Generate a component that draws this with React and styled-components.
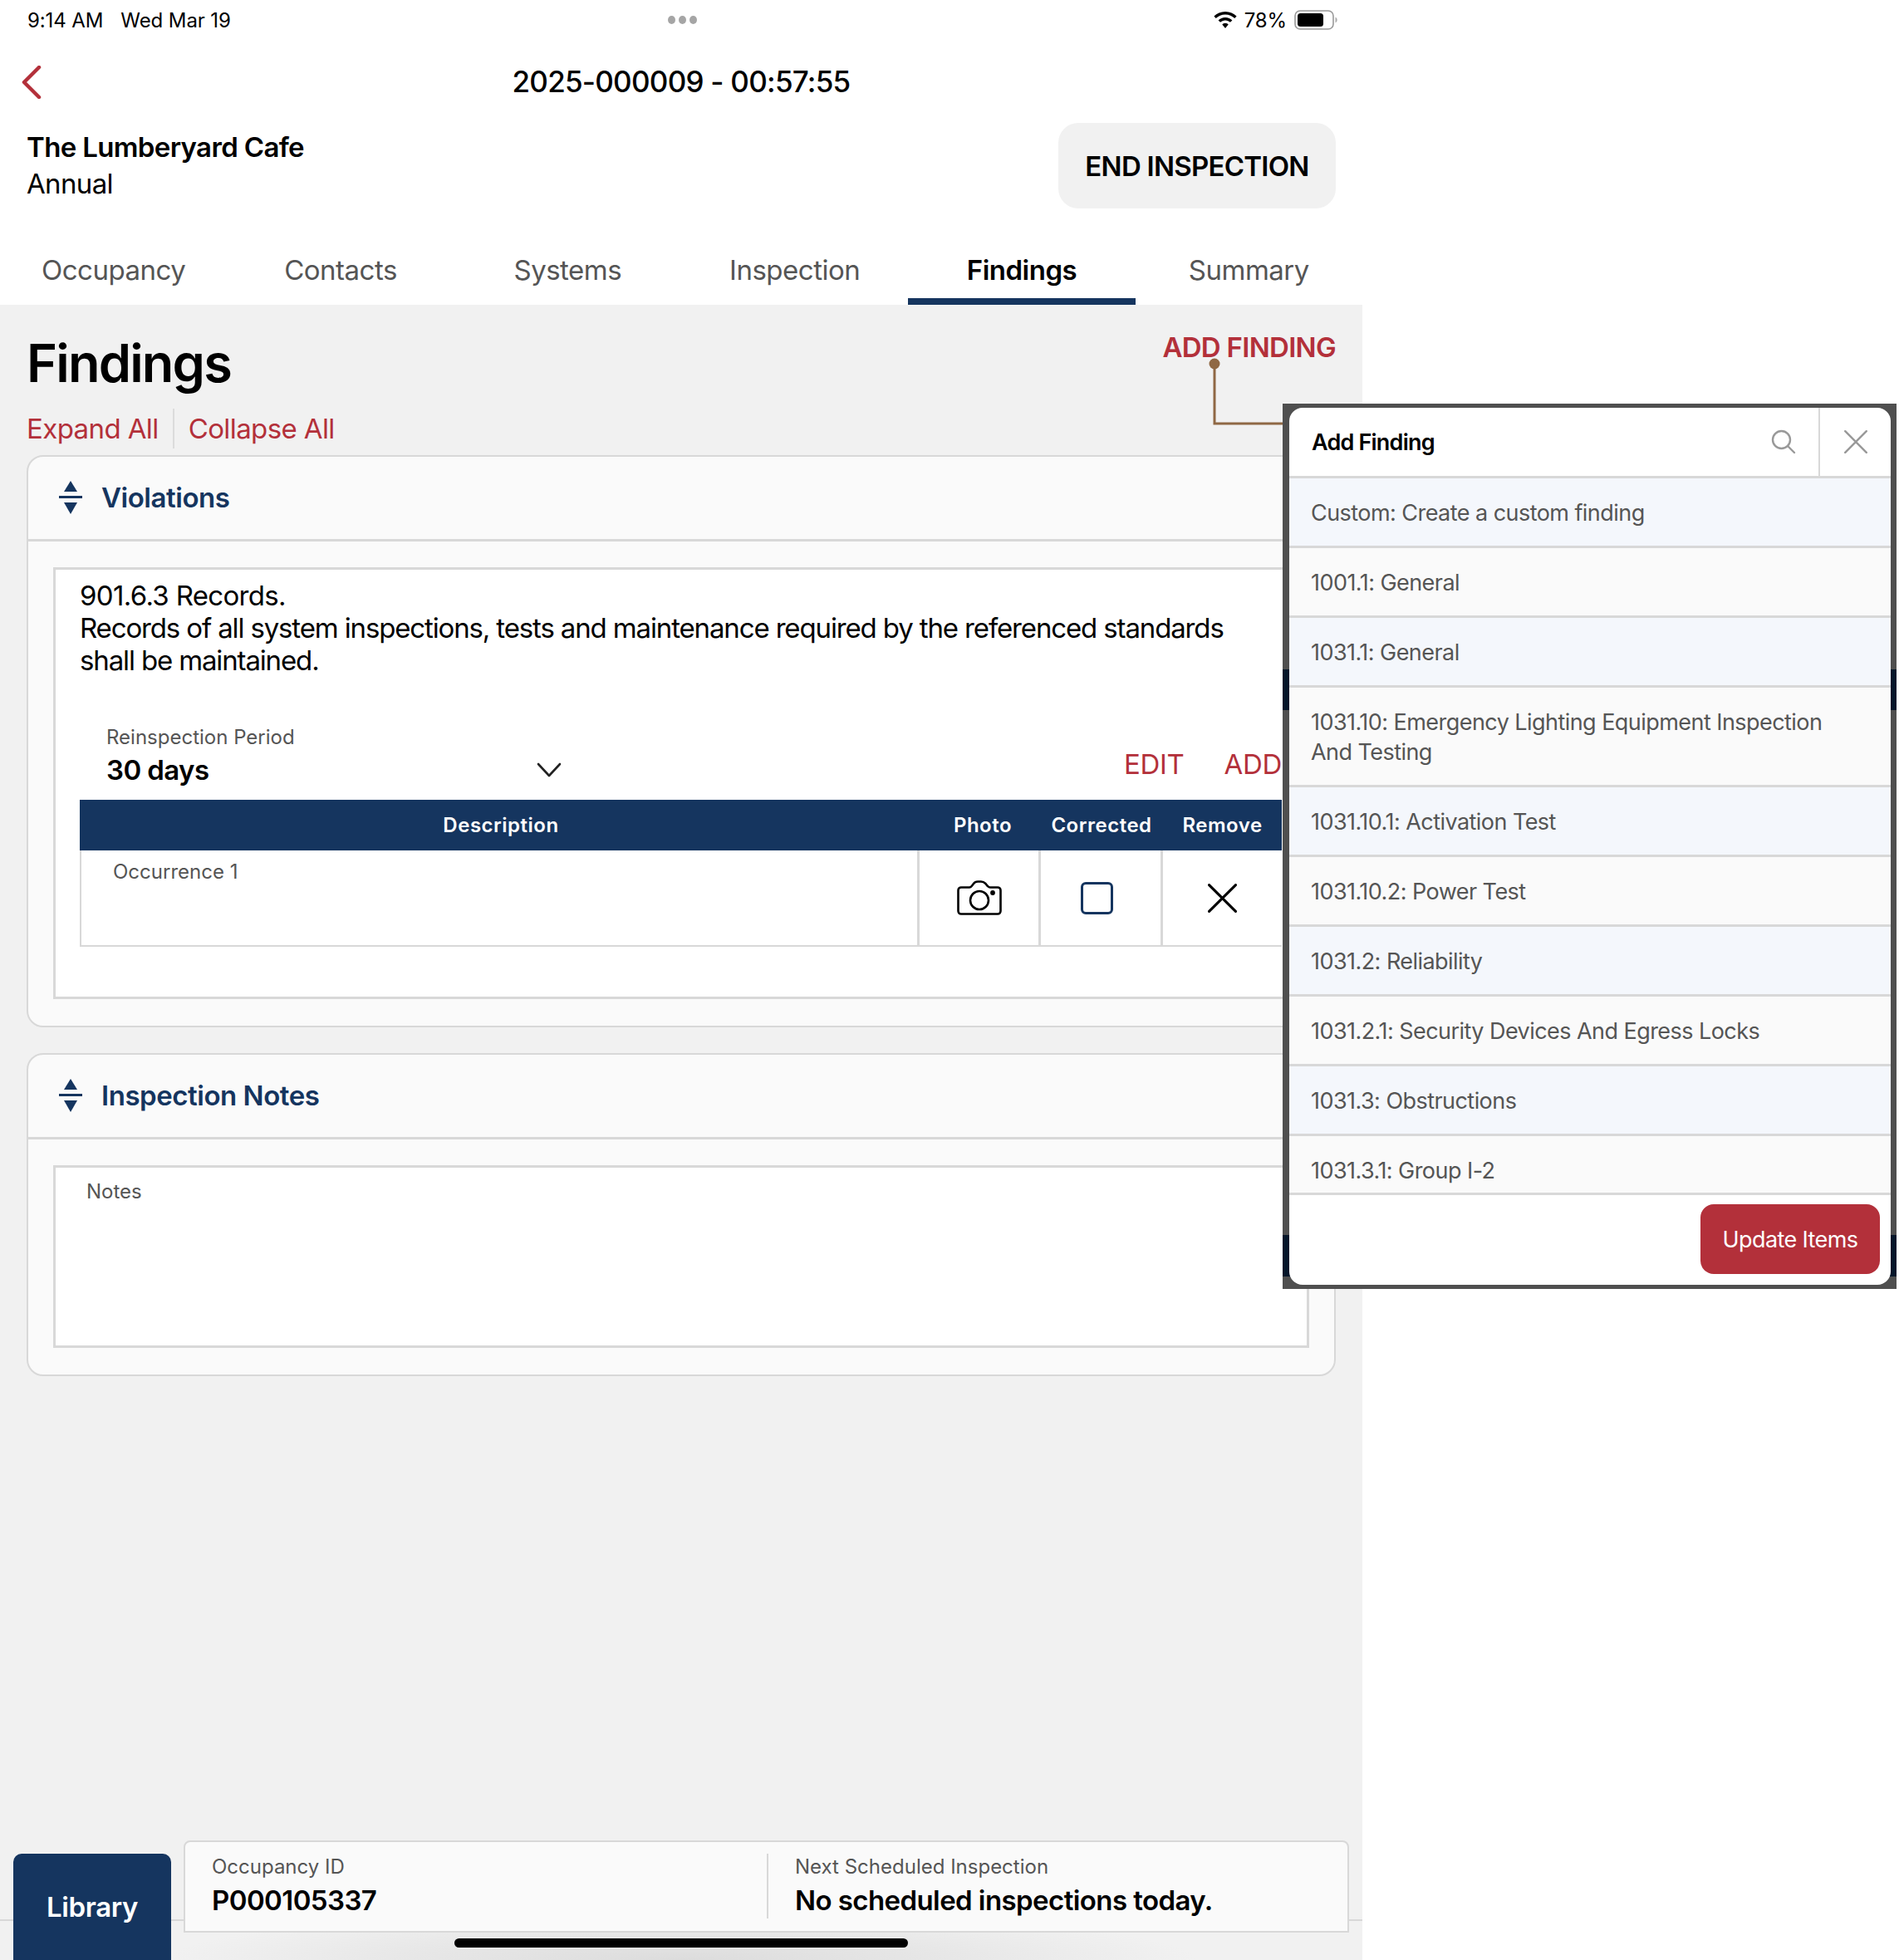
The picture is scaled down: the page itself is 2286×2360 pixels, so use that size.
import React from 'react';
import styled, { createGlobalStyle } from 'styled-components';

const navy = '#15355f';
const red = '#b3303a';
const line = '#d8d8d8';

const GlobalStyle = createGlobalStyle`
  html, body {
    margin: 0;
    padding: 0;
    background: #fff;
  }
  body {
    font-family: Inter, "Liberation Sans", sans-serif;
    color: #000;
  }
`;

const Screen = styled.div`
  position: relative;
  width: 2286px;
  height: 2360px;
  overflow: hidden;
  background: #fff;
`;

const Page = styled.div`
  width: 1640px;
  height: 2360px;
  display: flex;
  flex-direction: column;
`;

// Status bar
const StatusBar = styled.div`
  height: 48px;
  display: grid;
  grid-template-columns: 1fr auto 1fr;
  align-items: center;
  padding: 0 30px 0 33px;
  font-size: 24px;
  letter-spacing: -0.1px;
`;

const StatusLeft = styled.div`
  display: flex;
  gap: 21px;
`;

const Dots = styled.div`
  display: flex;
  gap: 4px;
  span {
    width: 9px;
    height: 10px;
    border-radius: 50%;
    background: #a5a5a5;
  }
`;

const StatusRight = styled.div`
  display: flex;
  justify-content: flex-end;
  align-items: center;
  gap: 9px;
`;

const NavBar = styled.div`
  height: 100px;
  position: relative;
  display: flex;
  align-items: center;
  justify-content: center;
`;

const BackButton = styled.svg`
  position: absolute;
  left: 26px;
  top: 31px;
`;

const NavTitle = styled.div`
  font-size: 35px;
  font-weight: 500;
  letter-spacing: -0.75px;
`;

const Header = styled.div`
  height: 103px;
  display: flex;
  justify-content: space-between;
  padding: 0 32px 0 32px;
`;

const HeaderInfo = styled.div`
  padding-top: 7px;
  font-size: 33px;
  line-height: 44px;
  letter-spacing: -0.65px;
`;

const HeaderName = styled.div`
  font-weight: 600;
`;

const EndButton = styled.div`
  width: 334px;
  height: 103px;
  background: #f1f1f1;
  border-radius: 24px;
  display: flex;
  align-items: center;
  justify-content: center;
  font-size: 33px;
  font-weight: 600;
  letter-spacing: -0.75px;
`;

const Tabs = styled.div`
  margin-top: 32px;
  height: 84px;
  display: grid;
  grid-template-columns: repeat(6, 1fr);
`;

const Tab = styled.div`
  display: flex;
  justify-content: center;
  padding-top: 22px;
  font-size: 33px;
  line-height: 40px;
  letter-spacing: -0.5px;
  font-weight: ${(p) => (p.$active ? 600 : 400)};
  color: ${(p) => (p.$active ? '#000' : '#555')};
  box-shadow: ${(p) => (p.$active ? `inset 0 -8px 0 ${navy}` : 'none')};
`;

// Main content
const Content = styled.div`
  flex: 1;
  background: #f1f1f1;
  padding: 0 32px;
`;

const TitleRow = styled.div`
  height: 181px;
  display: flex;
  justify-content: space-between;
`;

const Heading = styled.h1`
  margin: 32px 0 0;
  font-size: 63px;
  line-height: 76px;
  font-weight: 600;
  letter-spacing: -1.8px;
`;

const ToggleLinks = styled.div`
  margin-top: 17px;
  display: flex;
  align-items: center;
  color: ${red};
  font-size: 33px;
  line-height: 48px;
  letter-spacing: -0.6px;
`;

const ToggleLink = styled.span`
  & + & {
    margin-left: 17px;
    padding-left: 17px;
    border-left: 2px solid #dcdcdc;
  }
`;

const AddFinding = styled.div`
  margin-top: 31px;
  color: ${red};
  font-size: 33px;
  line-height: 40px;
  font-weight: 600;
  letter-spacing: -0.7px;
`;

const Card = styled.section`
  box-sizing: border-box;
  background: #fafafa;
  border: 2px solid ${line};
  border-radius: 20px;
  padding-bottom: 32px;
  & + & {
    margin-top: 31px;
  }
`;

const CardHeader = styled.div`
  height: 102px;
  box-sizing: border-box;
  border-bottom: 3px solid ${line};
  display: flex;
  align-items: center;
  gap: 23px;
  padding: 0 0 2px 37px;
  color: ${navy};
  font-size: 33px;
  font-weight: 600;
  letter-spacing: -0.46px;
`;

const CardInner = styled.div`
  box-sizing: border-box;
  margin: 31px 30px 0;
  background: #fff;
  border: 3px solid ${line};
  height: ${(p) => p.$height}px;
`;

const Description = styled.div`
  padding: 12px 30px 0 29px;
  font-size: 33px;
  line-height: 39px;
  letter-spacing: -1.14px;
  height: 187px;
  box-sizing: border-box;
`;

const DescriptionTitle = styled.div`
  letter-spacing: -0.67px;
`;

const FieldRow = styled.div`
  height: 90px;
  margin: 0 30px;
  display: flex;
  align-items: flex-start;
  justify-content: space-between;
`;

const SelectField = styled.div`
  width: 548px;
  margin-left: 31px;
`;

const FieldLabel = styled.div`
  font-size: 24px;
  line-height: 30px;
  color: #555;
`;

const SelectValue = styled.div`
  margin-top: 3px;
  display: flex;
  justify-content: space-between;
  align-items: center;
  font-size: 33px;
  line-height: 42px;
  font-weight: 600;
  letter-spacing: -0.6px;
`;

const RowActions = styled.div`
  margin-top: 27px;
  display: flex;
  gap: 48px;
  color: ${red};
  font-size: 33px;
  line-height: 40px;
  letter-spacing: -0.3px;
`;

const Table = styled.div`
  margin: 0 30px 0 29px;
`;

const TableHeader = styled.div`
  height: 61px;
  background: ${navy};
  color: #fff;
  font-size: 24px;
  font-weight: 600;
  letter-spacing: 0.5px;
  display: grid;
  grid-template-columns: 1008px 146px 147px 146px;
  align-items: center;
  text-align: center;
`;

const HeaderCell = styled.span`
  padding-left: ${(p) => p.$nudge}px;
`;

const TableRow = styled.div`
  height: 116px;
  box-sizing: border-box;
  border-bottom: 2px solid ${line};
  border-left: 2px solid ${line};
  display: grid;
  grid-template-columns: 1006px 146px 147px 146px;
`;

const OccurrenceCell = styled.div`
  padding: 10px 0 0 38px;
  font-size: 24px;
  line-height: 32px;
  color: #555;
`;

const IconCell = styled.div`
  border-left: 3px solid ${line};
  display: flex;
  align-items: center;
  justify-content: center;
`;

const Checkbox = styled.div`
  width: 39px;
  height: 39px;
  box-sizing: border-box;
  border: 3px solid ${navy};
  border-radius: 6px;
  margin-left: -9px;
`;

const NotesLabel = styled.div`
  padding: 13px 0 0 37px;
  font-size: 24px;
  line-height: 32px;
  color: #555;
`;

// Footer
const Footer = styled.div`
  position: relative;
  height: 144px;
  background: radial-gradient(ellipse 620px 60px at 820px 144px, #dcdcdc, #f1f1f1);
  display: flex;
  align-items: flex-start;
  padding-left: 16px;
  background-color: #f1f1f1;
  &::before {
    content: '';
    position: absolute;
    left: 0;
    right: 0;
    top: 95px;
    height: 2px;
    background: ${line};
  }
`;

const LibraryButton = styled.div`
  position: relative;
  width: 190px;
  height: 128px;
  margin-top: 16px;
  background: ${navy};
  border-radius: 10px 10px 0 0;
  color: #fff;
  font-size: 33px;
  font-weight: 600;
  letter-spacing: -0.4px;
  display: flex;
  align-items: center;
  justify-content: center;
`;

const InfoCard = styled.div`
  position: relative;
  box-sizing: border-box;
  width: 1403px;
  height: 111px;
  margin-left: 15px;
  background: #fafafa;
  border: 2px solid ${line};
  border-radius: 8px 8px 0 0;
  display: grid;
  grid-template-columns: 700px 1fr;
  padding-top: 14px;
`;

const InfoCell = styled.div`
  height: 78px;
  padding-left: 32px;
  & + & {
    border-left: 2px solid ${line};
  }
`;

const InfoLabel = styled.div`
  font-size: 24px;
  line-height: 32px;
  color: #555;
`;

const InfoValue = styled.div`
  margin-top: 3px;
  font-size: 33px;
  line-height: 42px;
  font-weight: 600;
  letter-spacing: -0.58px;
`;

const HomeIndicator = styled.div`
  position: absolute;
  left: 547px;
  top: 118px;
  width: 546px;
  height: 11px;
  border-radius: 6px;
  background: #000;
`;

// Callout line between ADD FINDING and the popover
const Callout = styled.svg`
  position: absolute;
  left: 1452px;
  top: 428px;
`;

const PopoverFrame = styled.div`
  position: absolute;
  left: 1544px;
  top: 486px;
  width: 739px;
  height: 1066px;
  box-sizing: border-box;
  padding: 5px 7px 5px 8px;
  background: linear-gradient(
    #4f4f4f 0 320px,
    #04162a 320px 369px,
    #4f4f4f 369px 1001px,
    #04162a 1001px 1051px,
    #4f4f4f 1051px
  );
`;

const Popover = styled.div`
  height: 100%;
  background: #fff;
  border-radius: 16px;
  display: flex;
  flex-direction: column;
  overflow: hidden;
`;

const PopoverHeader = styled.div`
  height: 85px;
  flex: none;
  box-sizing: border-box;
  border-bottom: 3px solid ${line};
  display: flex;
  align-items: center;
  padding-left: 27px;
`;

const PopoverTitle = styled.div`
  flex: 1;
  font-size: 27px;
  font-weight: 600;
  letter-spacing: -0.8px;
`;

const SearchBox = styled.div`
  width: 84px;
  height: 100%;
  display: flex;
  align-items: center;
  justify-content: center;
`;

const CloseBox = styled.div`
  width: 87px;
  height: 100%;
  box-sizing: border-box;
  border-left: 2px solid ${line};
  display: flex;
  align-items: center;
  justify-content: center;
`;

const FindingList = styled.div`
  height: 863px;
  flex: none;
  box-sizing: border-box;
  border-bottom: 3px solid ${line};
  overflow: hidden;
`;

const FindingRow = styled.div`
  box-sizing: border-box;
  min-height: 84px;
  padding: 24px 50px 21px 26px;
  border-bottom: 3px solid ${line};
  background: ${(p) => (p.$alt ? '#f4f7fc' : '#fafafa')};
  color: #555;
  font-size: 27px;
  line-height: 36px;
  letter-spacing: -0.55px;
`;

const PopoverFooter = styled.div`
  flex: 1;
  display: flex;
  justify-content: flex-end;
  padding: 11px 13px 0 0;
`;

const UpdateButton = styled.div`
  width: 216px;
  height: 84px;
  background: ${red};
  color: #fff;
  border-radius: 16px;
  font-size: 27px;
  letter-spacing: -0.6px;
  display: flex;
  align-items: center;
  justify-content: center;
`;

const SortIcon = () => (
  <svg width="28" height="40" viewBox="0 0 28 40">
    <path d="M14 0 L22 13 L6 13 Z" fill={navy} />
    <rect x="0" y="18" width="28" height="3" fill={navy} />
    <path d="M14 40 L22 26 L6 26 Z" fill={navy} />
  </svg>
);

const CameraIcon = () => (
  <svg width="54" height="42" viewBox="0 0 54 42" fill="none" stroke="#000" strokeWidth="2.6" strokeLinejoin="round">
    <path d="M5 8.5 H15 C17 8.5 18 6.5 20 4 C21 2.5 22.5 1.5 25 1.5 H29 C31.5 1.5 33 2.5 34.5 4 C36.5 6.5 37.5 8.5 40 8.5 H49 C51 8.5 52.5 10 52.5 12 V37 C52.5 39 51 40.5 49 40.5 H5 C3 40.5 1.5 39 1.5 37 V12 C1.5 10 3 8.5 5 8.5 Z" />
    <circle cx="27" cy="24" r="11" />
    <circle cx="43" cy="15" r="1.6" fill="#000" />
  </svg>
);

const CrossIcon = ({ size, color, weight }) => (
  <svg width={size} height={size} viewBox="0 0 34 34" fill="none" stroke={color} strokeWidth={weight} strokeLinecap="round">
    <path d="M1.5 1.5 L32.5 32.5 M32.5 1.5 L1.5 32.5" />
  </svg>
);

const WifiIcon = () => (
  <svg width="28" height="21" viewBox="0 0 28 21">
    <path d="M14 0 C19.5 0 24.2 2.2 27.6 5.6 L25.3 8 C22.4 5.2 18.4 3.4 14 3.4 C9.6 3.4 5.6 5.2 2.7 8 L0.4 5.6 C3.8 2.2 8.5 0 14 0 Z" fill="#000" />
    <path d="M14 7 C17.2 7 20.2 8.3 22.4 10.4 L20 12.8 C18.4 11.3 16.3 10.4 14 10.4 C11.7 10.4 9.6 11.3 8 12.8 L5.6 10.4 C7.8 8.3 10.8 7 14 7 Z" fill="#000" />
    <path d="M14 14 C15.4 14 16.7 14.5 17.7 15.4 L14 20 L10.3 15.4 C11.3 14.5 12.6 14 14 14 Z" fill="#000" />
  </svg>
);

const BatteryIcon = () => (
  <svg width="52" height="24" viewBox="0 0 52 24">
    <rect x="1" y="1" width="46" height="22" rx="6" fill="none" stroke="#999" strokeWidth="1.6" />
    <rect x="4" y="4" width="31" height="16" rx="3.5" fill="#000" />
    <path d="M49.5 8.5 C51 9.5 51.6 10.6 51.6 12 C51.6 13.4 51 14.5 49.5 15.5 Z" fill="#aaa" />
  </svg>
);

const findings = [
  'Custom: Create a custom finding',
  '1001.1: General',
  '1031.1: General',
  '1031.10: Emergency Lighting Equipment Inspection And Testing',
  '1031.10.1: Activation Test',
  '1031.10.2: Power Test',
  '1031.2: Reliability',
  '1031.2.1: Security Devices And Egress Locks',
  '1031.3: Obstructions',
  '1031.3.1: Group I-2',
];

const tabs = ['Occupancy', 'Contacts', 'Systems', 'Inspection', 'Findings', 'Summary'];

const App = () => (
  <Screen>
    <GlobalStyle />
    <Page>
      <StatusBar>
        <StatusLeft>
          <span>9:14 AM</span>
          <span>Wed Mar 19</span>
        </StatusLeft>
        <Dots>
          <span />
          <span />
          <span />
        </Dots>
        <StatusRight>
          <WifiIcon />
          <span>78%</span>
          <BatteryIcon />
        </StatusRight>
      </StatusBar>

      <NavBar>
        <BackButton width="24" height="40" viewBox="0 0 24 40" fill="none" stroke={red} strokeWidth="4.5" strokeLinecap="round" strokeLinejoin="round">
          <path d="M21 2 L3 20 L21 38" />
        </BackButton>
        <NavTitle>2025-000009 - 00:57:55</NavTitle>
      </NavBar>

      <Header>
        <HeaderInfo>
          <HeaderName>The Lumberyard Cafe</HeaderName>
          <div>Annual</div>
        </HeaderInfo>
        <EndButton>END INSPECTION</EndButton>
      </Header>

      <Tabs>
        {tabs.map((t) => (
          <Tab key={t} $active={t === 'Findings'}>
            {t}
          </Tab>
        ))}
      </Tabs>

      <Content>
        <TitleRow>
          <div>
            <Heading>Findings</Heading>
            <ToggleLinks>
              <ToggleLink>Expand All</ToggleLink>
              <ToggleLink>Collapse All</ToggleLink>
            </ToggleLinks>
          </div>
          <AddFinding>ADD FINDING</AddFinding>
        </TitleRow>

        <Card>
          <CardHeader>
            <SortIcon />
            Violations
          </CardHeader>
          <CardInner $height={520}>
            <Description>
              <DescriptionTitle>901.6.3 Records.</DescriptionTitle>
              Records of all system inspections, tests and maintenance required by the referenced standards
              <br />
              shall be maintained.
            </Description>
            <FieldRow>
              <SelectField>
                <FieldLabel>Reinspection Period</FieldLabel>
                <SelectValue>
                  30 days
                  <svg width="30" height="20" viewBox="0 0 30 20" fill="none" stroke="#222" strokeWidth="2.6" strokeLinecap="round" strokeLinejoin="round">
                    <path d="M2 3 L15 17 L28 3" />
                  </svg>
                </SelectValue>
              </SelectField>
              <RowActions>
                <span>EDIT</span>
                <span>ADD</span>
              </RowActions>
            </FieldRow>
            <Table>
              <TableHeader>
                <HeaderCell $nudge={6}>Description</HeaderCell>
                <HeaderCell $nudge={12}>Photo</HeaderCell>
                <HeaderCell $nudge={5}>Corrected</HeaderCell>
                <HeaderCell $nudge={3}>Remove</HeaderCell>
              </TableHeader>
              <TableRow>
                <OccurrenceCell>Occurrence 1</OccurrenceCell>
                <IconCell>
                  <CameraIcon />
                </IconCell>
                <IconCell>
                  <Checkbox />
                </IconCell>
                <IconCell>
                  <CrossIcon size={35} color="#000" weight={3} />
                </IconCell>
              </TableRow>
            </Table>
          </CardInner>
        </Card>

        <Card>
          <CardHeader>
            <SortIcon />
            Inspection Notes
          </CardHeader>
          <CardInner $height={220}>
            <NotesLabel>Notes</NotesLabel>
          </CardInner>
        </Card>
      </Content>

      <Footer>
        <LibraryButton>Library</LibraryButton>
        <InfoCard>
          <InfoCell>
            <InfoLabel>Occupancy ID</InfoLabel>
            <InfoValue>P000105337</InfoValue>
          </InfoCell>
          <InfoCell>
            <InfoLabel>Next Scheduled Inspection</InfoLabel>
            <InfoValue>No scheduled inspections today.</InfoValue>
          </InfoCell>
        </InfoCard>
        <HomeIndicator />
      </Footer>
    </Page>

    <Callout width="100" height="90" viewBox="0 0 100 90" fill="none" stroke="#8f6844" strokeWidth="3">
      <circle cx="10" cy="10" r="6.5" fill="#8f6844" stroke="none" />
      <path d="M10 10 V82 H96" />
    </Callout>

    <PopoverFrame>
      <Popover>
        <PopoverHeader>
          <PopoverTitle>Add Finding</PopoverTitle>
          <SearchBox>
            <svg width="30" height="30" viewBox="0 0 30 30" fill="none" stroke="#999" strokeWidth="2.4" strokeLinecap="round">
              <circle cx="12.5" cy="12.5" r="10.5" />
              <path d="M20 20 L28 28" />
            </svg>
          </SearchBox>
          <CloseBox>
            <CrossIcon size={28} color="#999" weight={3} />
          </CloseBox>
        </PopoverHeader>
        <FindingList>
          {findings.map((f, i) => (
            <FindingRow key={f} $alt={i % 2 === 0 ? 1 : 0}>
              {f}
            </FindingRow>
          ))}
        </FindingList>
        <PopoverFooter>
          <UpdateButton>Update Items</UpdateButton>
        </PopoverFooter>
      </Popover>
    </PopoverFrame>
  </Screen>
);

export default App;
